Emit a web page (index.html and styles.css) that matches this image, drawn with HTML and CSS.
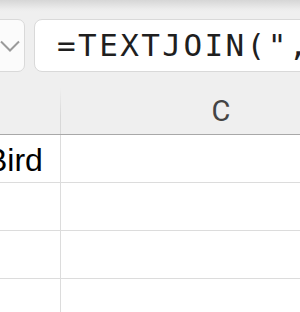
FILE: index.html
```html
<!DOCTYPE html>
<html lang="en">
<head>
  <meta charset="UTF-8" />
  <title>Sheet</title>
  <link rel="stylesheet" href="styles.css">
</head>
<body>
  <div class="toolbar">
    <div class="name-box">
      <svg width="20" height="12" viewBox="0 0 20 12"><path d="M1 1.5 L10 10.5 L19 1.5" fill="none" stroke="#9a9a9a" stroke-width="2"/></svg>
    </div>
    <div class="formula-box">=TEXTJOIN(", ",TRUE,A2:A4)</div>
  </div>

  <div class="sheet">
    <div class="row header">
      <div class="cell col-a"></div>
      <div class="cell col-c">C</div>
    </div>
    <div class="row">
      <div class="cell col-a">Bird</div>
      <div class="cell col-c"></div>
    </div>
    <div class="row">
      <div class="cell col-a"></div>
      <div class="cell col-c"></div>
    </div>
    <div class="row">
      <div class="cell col-a"></div>
      <div class="cell col-c"></div>
    </div>
    <div class="row">
      <div class="cell col-a"></div>
      <div class="cell col-c"></div>
    </div>
  </div>
</body>
</html>
```

FILE: styles.css
```css
body {
  margin: 0;
  background-color: #efefef;
  overflow: hidden;
  font-family: "Liberation Sans", Arial, sans-serif;
}
.toolbar {
  display: flex;
  gap: 9px;
  height: 88px;
  padding-top: 19px;
  box-sizing: border-box;
  background: linear-gradient(to bottom, #d6d6d6 0, #ececec 9px, #efefef 12px);
}
.name-box {
  flex: 0 0 60px;
  margin-left: -35px;
  height: 53px;
  box-sizing: border-box;
  display: flex;
  align-items: center;
  justify-content: flex-end;
  padding-right: 4px;
  background-color: #fbfbfb;
  border: 1px solid #d9d9d9;
  border-radius: 7px;
}
.formula-box {
  flex: 0 0 400px;
  height: 53px;
  box-sizing: border-box;
  padding-left: 22px;
  background-color: #fff;
  border: 1px solid #d9d9d9;
  border-radius: 8px;
  font-family: "DejaVu Sans Mono", monospace;
  font-size: 31px;
  letter-spacing: 2.4px;
  line-height: 51px;
  color: #1f1f1f;
  white-space: nowrap;
  overflow: hidden;
}
.sheet {
  background-color: #fff;
}
.row {
  display: flex;
  height: 48px;
  box-sizing: border-box;
  border-bottom: 1px solid #dcdcdc;
}
.cell {
  box-sizing: border-box;
  flex: none;
}
.col-a {
  width: 101px;
  margin-left: -40px;
  padding-left: 26px;
  padding-top: 3px;
  border-right: 1px solid #dcdcdc;
  font-size: 32px;
  line-height: 44px;
  color: #000;
  white-space: nowrap;
}
.col-c {
  width: 320px;
}
.header {
  height: 47px;
  background-color: #efefef;
  border-bottom: 1px solid #a8a8a8;
}
.header .col-a {
  position: relative;
  border-right: none;
  width: 101px;
}
.header .col-a::after {
  content: "";
  position: absolute;
  right: 0;
  top: 0;
  width: 1px;
  height: 100%;
  background: linear-gradient(to bottom, rgba(220, 220, 220, 0), #d8d8d8 60%);
}
.header .col-c {
  font-family: Roboto, sans-serif;
  font-size: 29px;
  line-height: 46px;
  text-align: center;
  color: #444;
}
```
